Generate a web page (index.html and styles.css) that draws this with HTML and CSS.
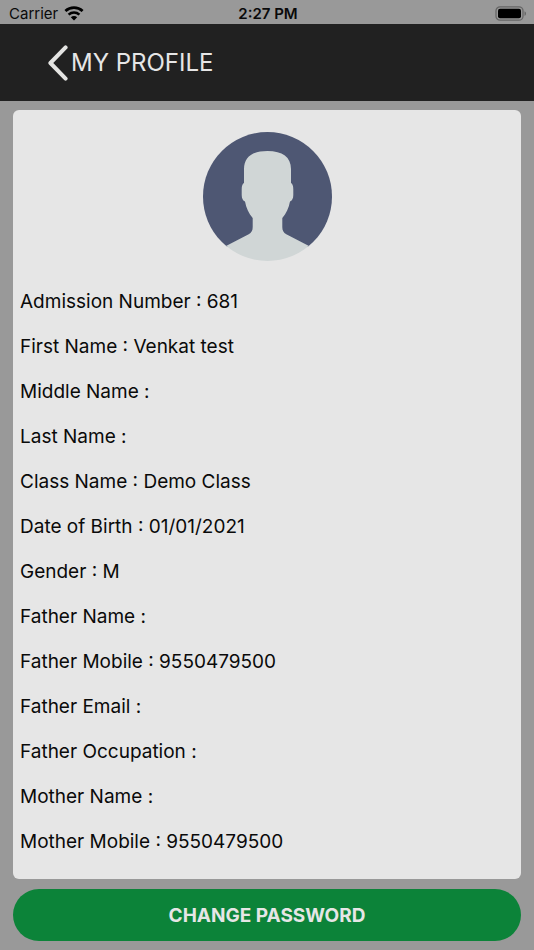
FILE: index.html
```
<!DOCTYPE html>
<html lang="en">
<head>
    <meta charset="UTF-8">
    <meta name="viewport" content="width=device-width, initial-scale=1.0">
    <title>My Profile</title>
    <link rel="stylesheet" href="styles.css">
</head>
<body>
    <div class="status-bar">
        <div class="carrier">
            <span>Carrier</span>
            <svg class="wifi" viewBox="0 0 20 15" aria-hidden="true">
                <path d="M1.4 5C6.300.6 13.700.6 18.600 5" fill="none" stroke="#000" stroke-width="2.8"/>
                <path d="M4.600 8.600c3.100-2.800 7.700-2.800 10.800 0" fill="none" stroke="#000" stroke-width="2.600"/>
                <path d="M10 14.600l-3.200-3.300c1.900-1.600 4.500-1.600 6.400 0z"/>
            </svg>
        </div>
        <div class="time">2:27 PM</div>
        <svg class="battery" viewBox="0 0 32 15" aria-hidden="true">
            <rect x="1" y=".8" width="27" height="13.4" rx="4" fill="none" stroke="#666" stroke-width="1.3"/>
            <rect x="3" y="2.7" width="23" height="9.6" rx="2"/>
            <path d="M29.5 5.2c2 .8 2 3.8 0 4.6z" fill="#666"/>
        </svg>
    </div>

    <header class="header">
        <a class="back" href="#" aria-label="Back">
            <svg viewBox="0 0 20 36" aria-hidden="true">
                <path d="M17.6 2.4L2.4 18l15.2 15.6" fill="none" stroke="#e4e4e2" stroke-width="4" stroke-linecap="round" stroke-linejoin="round"/>
            </svg>
        </a>
        <h1>MY PROFILE</h1>
    </header>

    <main class="content">
        <section class="card">
            <svg class="avatar" viewBox="0 0 129 129" role="img" aria-label="Profile photo">
                <defs>
                    <clipPath id="round"><circle cx="64.5" cy="64.5" r="64.5"/></clipPath>
                </defs>
                <g clip-path="url(#round)">
                    <rect width="129" height="115" fill="#4e5773"/>
                    <path fill="#d0d6d6" d="M64.5 19c-15 0-23.5 6-23.5 18v14c-1.500.5-2.300 3-2.300 6.500v5.500c0 3.500 1.300 5.800 3.300 6.500 1.200 6.500 3.800 12 7.700 16.500v9c0 3.500-1.200 5.700-4 7.300L23 114v15h83v-15l-22.700-11.700c-2.800-1.600-4-3.800-4-7.300v-9c3.900-4.500 6.500-10 7.700-16.500 2-.7 3.300-3 3.300-6.500v-5.500c0-3.500-.8-6-2.300-6.500V37c0-12-8.500-18-23.500-18z"/>
                </g>
            </svg>
            <ul class="details">
                <li>Admission Number : 681</li>
                <li>First Name : Venkat test</li>
                <li>Middle Name :</li>
                <li>Last Name :</li>
                <li>Class Name : Demo Class</li>
                <li>Date of Birth : 01/01/2021</li>
                <li>Gender : M</li>
                <li>Father Name :</li>
                <li>Father Mobile : 9550479500</li>
                <li>Father Email :</li>
                <li>Father Occupation :</li>
                <li>Mother Name :</li>
                <li>Mother Mobile : 9550479500</li>
            </ul>
        </section>
        <button class="password-btn" type="button">CHANGE PASSWORD</button>
    </main>
</body>
</html>
```
FILE: styles.css
```
* {
    box-sizing: border-box;
    margin: 0;
    padding: 0;
}
body {
    background-color: #999;
    color: #0a0a0a;
    font-family: Inter, "Liberation Sans", sans-serif;
    font-size: 19px;
    min-height: 100vh;
}
.status-bar {
    display: grid;
    grid-template-columns: 1fr auto 1fr;
    align-items: center;
    height: 24px;
    padding: 3px 7px 0 9px;
    font-size: 15px;
    line-height: 20px;
}
.carrier {
    display: flex;
    align-items: center;
    gap: 6px;
}
.wifi {
    width: 20px;
    height: 15px;
}
.time {
    font-weight: 600;
}
.battery {
    width: 32px;
    height: 15px;
    justify-self: end;
}
.header {
    display: flex;
    align-items: center;
    gap: 3px;
    height: 77px;
    padding: 0 48px;
    background-color: #212121;
    color: #e6e6e6;
}
.back svg {
    display: block;
    width: 20px;
    height: 36px;
}
.header h1 {
    font-size: 24px;
    font-weight: 400;
    line-height: 32px;
}
.content {
    display: flex;
    flex-direction: column;
    gap: 10px;
    padding: 9px 13px;
}
.card {
    padding: 22px 7px 15px;
    background-color: #e6e6e6;
    border-radius: 6px;
}
.avatar {
    display: block;
    width: 129px;
    height: 129px;
    margin: 0 auto 18px;
}
.details {
    list-style: none;
}
.details li {
    line-height: 45px;
}
.password-btn {
    height: 52px;
    border: none;
    border-radius: 26px;
    background-color: #0c8339;
    color: #e6e6e6;
    font-family: inherit;
    font-size: 19px;
    font-weight: 700;
    cursor: pointer;
}
```
